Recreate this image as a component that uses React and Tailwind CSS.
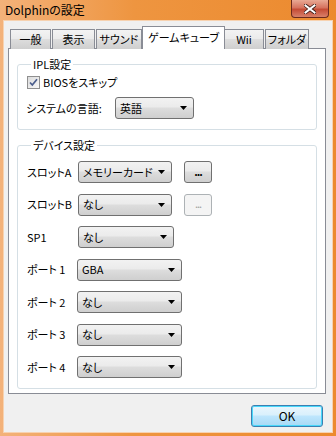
import React from "react";

const font = "font-['Noto_Sans_CJK_JP','Noto_Sans',sans-serif] [font-feature-settings:'palt']";

function Arrow() {
  return (
    <svg width="7" height="4" viewBox="0 0 7 4">
      <path d="M0 0h7L3.5 4z" fill="#000" />
    </svg>
  );
}

function Select({ value, w }) {
  return (
    <div className={`${w} h-[22px] flex items-center justify-between rounded-[3px] border border-[#707070] bg-[linear-gradient(#f2f2f2,#ebebeb_45%,#dddddd_50%,#cfcfcf)] pl-[4px] pr-[6px]`}>
      <span className="text-[11px] leading-none text-black whitespace-nowrap">{value}</span>
      <Arrow />
    </div>
  );
}

function DotsButton({ disabled }) {
  return disabled ? (
    <div className="w-[28px] h-[22px] flex items-center justify-center rounded-[3px] border border-[#adb2b5] bg-[#f4f4f4]">
      <span className="text-[11px] leading-none text-[#a0a0a0] tracking-[-1px] pb-[2px]">...</span>
    </div>
  ) : (
    <div className="w-[28px] h-[22px] flex items-center justify-center rounded-[3px] border border-[#707070] bg-[linear-gradient(#f2f2f2,#ebebeb_45%,#dddddd_50%,#cfcfcf)]">
      <span className="text-[11px] leading-none text-black tracking-[-1px] pb-[2px] font-bold">...</span>
    </div>
  );
}

const tabs = [
  { name: "一般", w: "w-[41px]" },
  { name: "表示", w: "w-[43px]" },
  { name: "サウンド", w: "w-[46px]" },
  { name: "ゲームキューブ", w: "w-[83px]", active: true },
  { name: "Wii", w: "w-[40px]" },
  { name: "フォルダ", w: "w-[44px]" },
];

const rows = [
  { label: "スロットA", lw: "w-[51px]", value: "メモリーカード", w: "w-[94px]", btn: "on" },
  { label: "スロットB", lw: "w-[51px]", value: "なし", w: "w-[94px]", btn: "off" },
  { label: "SP1", lw: "w-[51px]", value: "なし", w: "w-[96px]" },
  { label: "ポート 1", lw: "w-[50px]", value: "GBA", w: "w-[105px]" },
  { label: "ポート 2", lw: "w-[50px]", value: "なし", w: "w-[105px]" },
  { label: "ポート 3", lw: "w-[50px]", value: "なし", w: "w-[105px]" },
  { label: "ポート 4", lw: "w-[50px]", value: "なし", w: "w-[105px]" },
];

export default function App() {
  return (
    <div className={`w-[336px] h-[436px] flex flex-col bg-[linear-gradient(90deg,#f3b27a,#ee9540_40%,#ec8a2e)] ${font}`}>
      {/* title bar */}
      <div className="h-[20px] flex items-start justify-between">
        <div className="pl-[5px] pt-[3px] text-[12px] leading-[14px] text-black">Dolphinの設定</div>
        <div className="mr-[7px] w-[38px] h-[18px] flex items-center justify-center rounded-b-[4px] border border-t-0 border-[#6b2a1e] bg-[linear-gradient(#e9a994,#d6735f_45%,#c54c36_55%,#d8806a)]">
          <svg width="12" height="10" viewBox="0 0 12 10">
            <path d="M1.5 1.5l9 7M10.5 1.5l-9 7" stroke="#3a1a14" strokeWidth="3.6" strokeLinecap="square" />
            <path d="M1.5 1.5l9 7M10.5 1.5l-9 7" stroke="#fff" strokeWidth="2" strokeLinecap="square" />
          </svg>
        </div>
      </div>

      {/* client area */}
      <div className="flex-1 mx-[3px] mb-[3px] bg-[#f0f0f0] border border-[#f7d2b0] flex flex-col pl-[4px] pr-[6px] pt-[6px]">
        {/* tabs */}
        <div className="flex items-end h-[22px] pl-[2px] relative z-10 -mb-px">
          {tabs.map((t) =>
            t.active ? (
              <div key={t.name} className={`${t.w} h-[23px] -mx-[1px] bg-white border border-b-0 border-[#898c95] flex items-start justify-center pt-[4px] text-[11px] leading-[13px] text-black whitespace-nowrap`}>
                {t.name}
              </div>
            ) : (
              <div key={t.name} className={`${t.w} h-[20px] mr-[1px] border border-b-0 border-[#898c95] bg-[linear-gradient(#f3f3f3,#ebebeb_45%,#dddddd_50%,#cfcfcf)] flex items-start justify-center pt-[3px] text-[11px] leading-[13px] text-black whitespace-nowrap`}>
                {t.name}
              </div>
            )
          )}
        </div>

        {/* panel */}
        <div className="flex-1 bg-white border border-[#898c95] px-[8px] pt-[8px]">
          <fieldset className="border border-[#d5dfe5] rounded-[3px] pl-[9px] pb-[10px]">
            <legend className="ml-[4px] px-[2px] text-[11px] leading-[14px] text-black">IPL設定</legend>
            <div className="flex items-center gap-[3px] mt-[5px] h-[13px]">
              <div className="w-[13px] h-[13px] border border-[#8f8f8f] bg-[linear-gradient(135deg,#dcdcdc,#f7f7f7)] flex items-center justify-center">
                <svg width="9" height="9" viewBox="0 0 9 9">
                  <path d="M1 4.5l2.3 2.5L8 1.2" fill="none" stroke="#4a5d8c" strokeWidth="1.7" />
                </svg>
              </div>
              <span className="text-[11px] leading-none text-black">BIOSをスキップ</span>
            </div>
            <div className="flex items-center mt-[8px]">
              <span className="w-[89px] text-[11px] leading-none text-black -ml-[1px]">システムの言語:</span>
              <Select value="英語" w="w-[79px]" />
            </div>
          </fieldset>

          <fieldset className="mt-[8px] border border-[#d5dfe5] rounded-[3px] pl-[9px] pb-[10px]">
            <legend className="ml-[4px] px-[2px] text-[11px] leading-[14px] text-black">デバイス設定</legend>
            <div className="flex flex-col gap-[10.5px] mt-[9px]">
              {rows.map((r) => (
                <div key={r.label} className="flex items-center">
                  <span className={`${r.lw} text-[11px] leading-none text-black whitespace-nowrap`}>{r.label}</span>
                  <Select value={r.value} w={r.w} />
                  {r.btn && (
                    <div className="ml-[12px]">
                      <DotsButton disabled={r.btn === "off"} />
                    </div>
                  )}
                </div>
              ))}
            </div>
          </fieldset>
        </div>

        {/* bottom buttons */}
        <div className="flex justify-end pt-[11px] pb-[5px] pr-[3px]">
          <div className="w-[72px] h-[22px] rounded-[3px] border border-[#3c7fb1] shadow-[inset_0_0_0_1px_#48d8fb] bg-[linear-gradient(#eaf6fd,#d9f0fc_45%,#bee6fd_50%,#a7d9f5)] flex items-center justify-center text-[12px] leading-none text-black">
            OK
          </div>
        </div>
      </div>
    </div>
  );
}
